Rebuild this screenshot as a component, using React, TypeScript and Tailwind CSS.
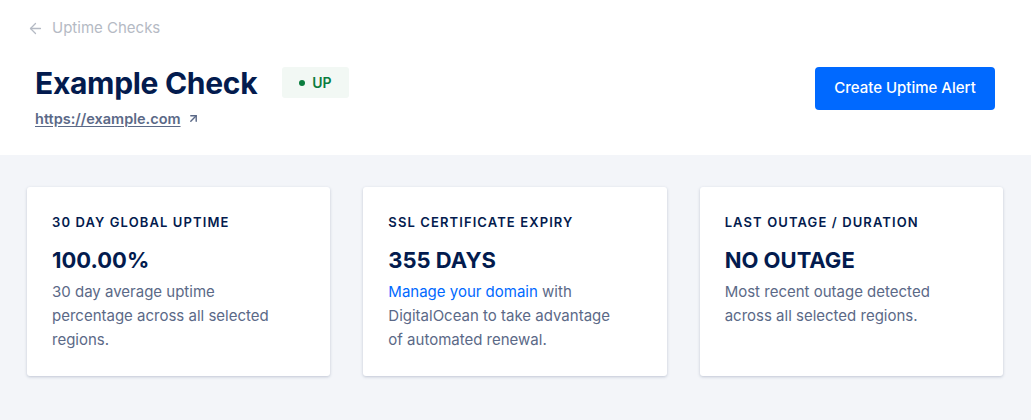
import { ArrowLeft, ArrowUpRight } from "lucide-react";

const cards = [
  {
    label: "30 DAY GLOBAL UPTIME",
    value: "100.00%",
    body: <>30 day average uptime percentage across all selected regions.</>,
  },
  {
    label: "SSL CERTIFICATE EXPIRY",
    value: "355 DAYS",
    body: (
      <>
        <span className="text-[#0069ff]">Manage your domain</span> with
        DigitalOcean to take advantage of automated renewal.
      </>
    ),
  },
  {
    label: "LAST OUTAGE / DURATION",
    value: "NO OUTAGE",
    body: <>Most recent outage detected across all selected regions.</>,
  },
];

const App = () => {
  return (
    <div className="flex min-h-[420px] flex-col bg-[#f3f5f9] font-['Inter','Liberation_Sans',sans-serif]">
      {/* header */}
      <div className="flex h-[155px] flex-col bg-white px-[27px] pt-[17px]">
        <div className="flex items-center gap-2 text-[15px] text-[#b5bac4]">
          <ArrowLeft size={17} strokeWidth={1.8} />
          <span>Uptime Checks</span>
        </div>

        <div className="mt-[27px] flex items-start justify-between pl-2 pr-[9px]">
          <div className="flex flex-col">
            <div className="flex items-center">
              <h1 className="text-[30px] leading-[32px] font-bold tracking-[-0.01em] text-[#031b4e]">
                Example Check
              </h1>
              <div className="ml-[25px] flex h-[31px] items-center gap-[7px] rounded-[3px] bg-[#f2f8f4] px-[17px] text-[14px] font-semibold text-[#0a7d3e]">
                <span className="h-[6px] w-[6px] rounded-full bg-[#0a7d3e]" />
                UP
              </div>
            </div>
            <div className="mt-[9px] flex items-center gap-[6px] text-[14.5px] font-semibold text-[#5b6987]">
              <span className="underline underline-offset-2">https://example.com</span>
              <ArrowUpRight size={13} strokeWidth={2.6} />
            </div>
          </div>

          <button className="h-[43px] w-[180px] rounded-[4px] bg-[#0069ff] text-[15px] font-medium text-white">
            Create Uptime Alert
          </button>
        </div>
      </div>

      {/* stats */}
      <div className="grid grid-cols-3 gap-[33px] px-[27px] pt-[32px] pb-[32px] pr-[28px]">
        {cards.map((card) => (
          <div
            key={card.label}
            className="h-[189px] rounded-[3px] bg-white px-[25px] pt-[26px] shadow-[0_1px_3px_rgba(40,60,100,0.25)]"
          >
            <div className="text-[13px] font-semibold tracking-[0.085em] text-[#031b4e]">
              {card.label}
            </div>
            <div className="mt-[14px] text-[22px] leading-[26px] font-bold text-[#031b4e]">
              {card.value}
            </div>
            <p className="mt-[7px] max-w-[232px] text-[15px] leading-[24px] text-[#5b6987]">
              {card.body}
            </p>
          </div>
        ))}
      </div>
    </div>
  );
};

export default App;
